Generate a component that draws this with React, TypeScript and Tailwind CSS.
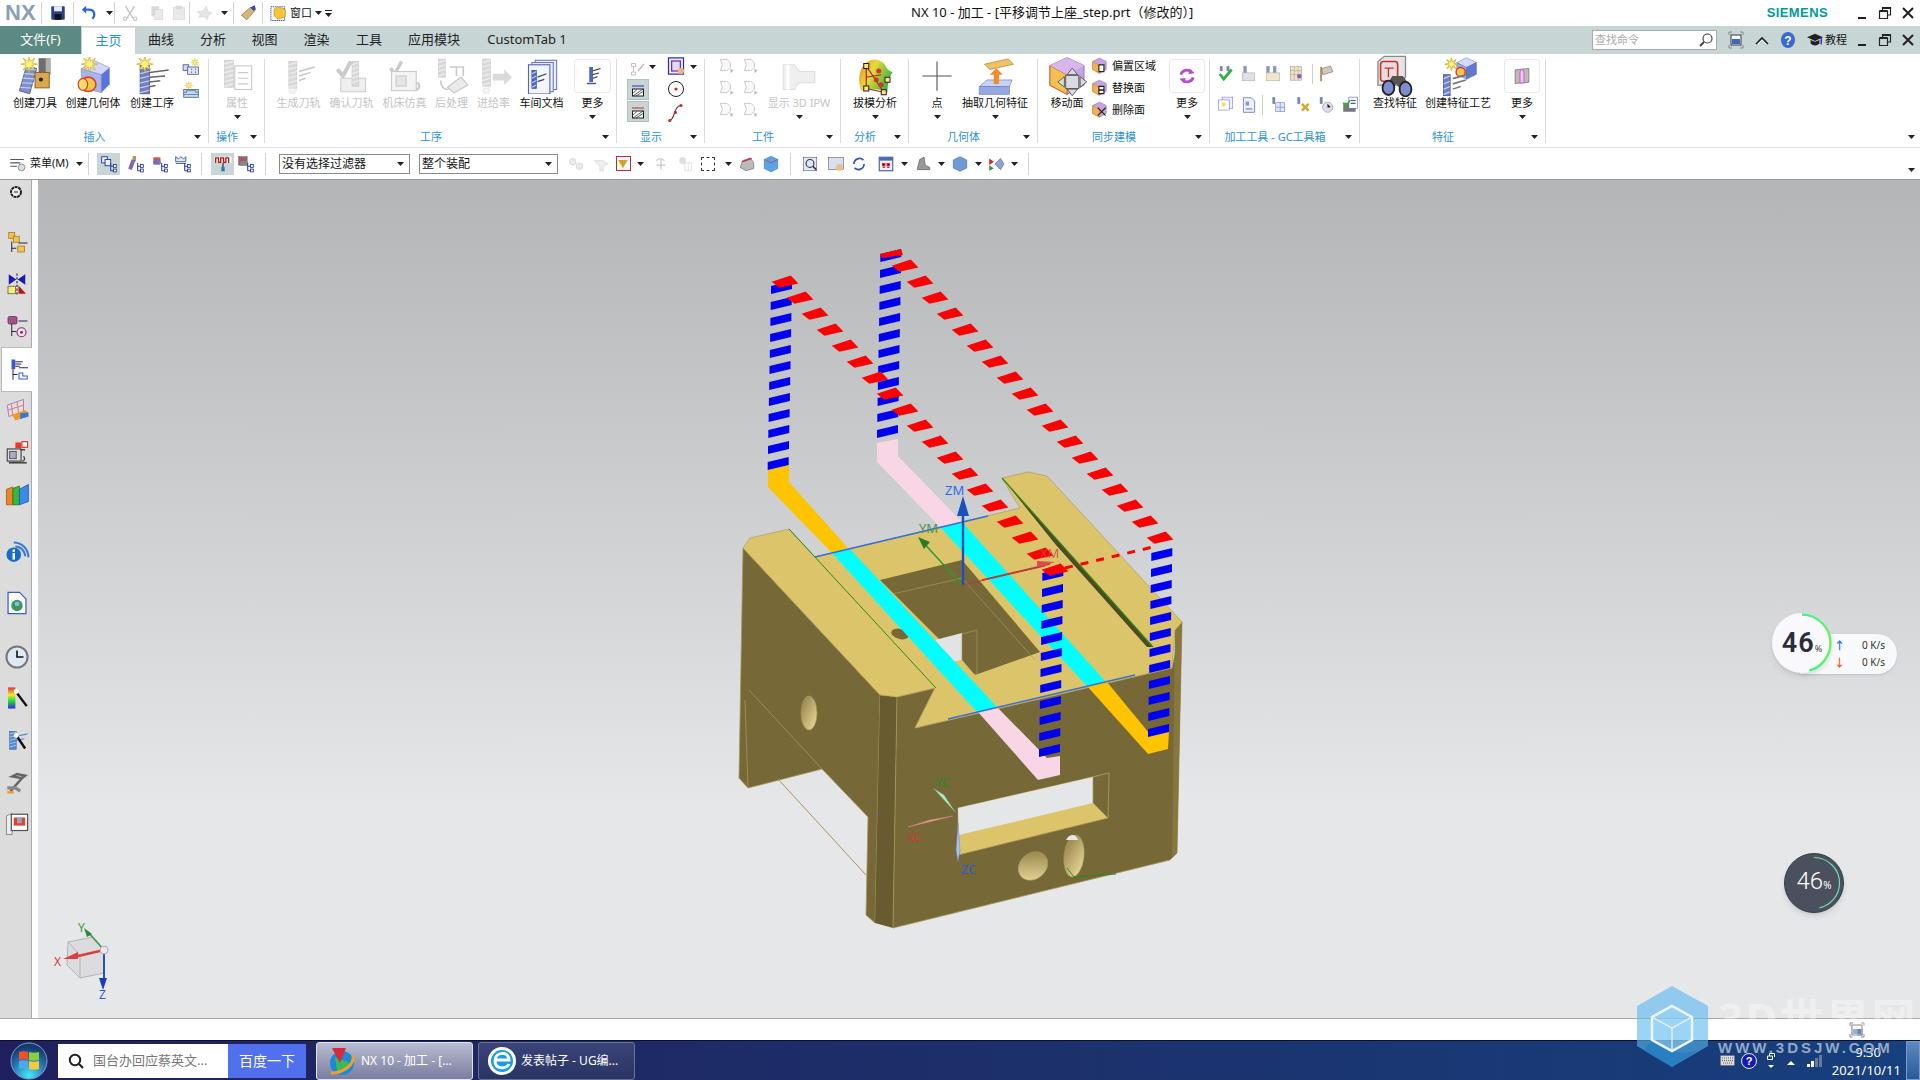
import React from 'react';

type IconProps = { s?: number; off?: boolean; children?: React.ReactNode };

// 32x32 drawing box, every icon in the ribbon goes through this
const Ico: React.FC<IconProps> = ({ s = 32, off, children }) => (
  <svg viewBox="0 0 32 32" width={s} height={s} className={off ? 'opacity-30 grayscale' : ''}>
    {children}
  </svg>
);

const Arrow = () => (
  <svg width="7" height="4" viewBox="0 0 7 4" className="shrink-0">
    <polygon points="0,0 7,0 3.5,4" fill="#222" />
  </svg>
);

// yellow burst used on the "create" icons
function spark(cx: number, cy: number, r: number) {
  const pts: string[] = [];
  for (let i = 0; i < 16; i++) {
    const a = (i * Math.PI) / 8;
    const d = i % 2 ? r * 0.38 : r;
    pts.push(`${cx + d * Math.cos(a)},${cy + d * Math.sin(a)}`);
  }
  return <polygon points={pts.join(' ')} fill="#fff27a" stroke="#c9a92a" strokeWidth="0.6" />;
}

// end mill: a ribbed cylinder
const mill = (x: number, y: number, h: number, w = 7, c = '#6f82c8') => (
  <g>
    <rect x={x} y={y} width={w} height={h} fill={c} stroke="#3c4a86" strokeWidth="0.6" />
    {Array.from({ length: Math.floor(h / 4) }).map((_, i) => (
      <line key={i} x1={x} y1={y + 3 + i * 4} x2={x + w} y2={y + 1 + i * 4} stroke="#c6d0ee" strokeWidth="1" />
    ))}
  </g>
);

const fan = (x: number, y: number, c = '#7a7f8c') => (
  <g stroke={c} strokeWidth="1.2" fill="none">
    <path d={`M${x} ${y}l14 -4M${x} ${y + 4}l10 -3M${x} ${y + 8}l6 -2`} />
  </g>
);

const cube = (x: number, y: number, k = 1) => (
  <g transform={`translate(${x} ${y}) scale(${k})`}>
    <polygon points="10,0 20,5 10,10 0,5" fill="#d2d9f6" stroke="#6a79c2" strokeWidth="0.5" />
    <polygon points="0,5 10,10 10,22 0,17" fill="#97a9ea" stroke="#6a79c2" strokeWidth="0.5" />
    <polygon points="20,5 10,10 10,22 20,17" fill="#5f78d8" stroke="#46589e" strokeWidth="0.5" />
  </g>
);

const IcoTool = () => (
  <Ico s={38}>
    <g transform="rotate(16 10 18)">{mill(6, 8, 22, 9, '#7f8fcc')}</g>
    <rect x="19" y="1" width="10" height="14" fill="#6e6e6e" />
    <rect x="25" y="1" width="4" height="14" fill="#b0b0b0" />
    <rect x="16" y="13" width="12" height="13" fill="#d8a84a" stroke="#8a5a2a" strokeWidth="0.8" />
    <circle cx="21" cy="19" r="1.7" fill="#222" />
    {spark(11, 6, 7)}
  </Ico>
);
const IcoGeom = () => (
  <Ico s={38}>
    <polygon points="17,3 30,9 23,15 6,10" fill="#cfd8f8" stroke="#7a89d2" strokeWidth="0.5" />
    <polygon points="6,10 23,15 23,30 7,26" fill="#a7b6f0" stroke="#7a89d2" strokeWidth="0.5" />
    <polygon points="30,9 23,15 23,30 30,23" fill="#5a74d8" />
    <ellipse cx="12" cy="23" rx="6.5" ry="6" fill="#f0c84a" stroke="#e0402a" strokeWidth="1.4" />
    <ellipse cx="7.5" cy="23" rx="4" ry="5" fill="#f6dc6a" stroke="#e0402a" strokeWidth="1" />
    {spark(13, 6, 7)}
  </Ico>
);
const IcoOp = () => (
  <Ico s={38}>
    {mill(6, 7, 24, 8, '#6f7fc0')}
    <path d="M14 13l16-2M14 17l13-1M14 21l9-1M14 25l5-1" stroke="#666" strokeWidth="1.3" fill="none" />
    {spark(10, 6, 7)}
  </Ico>
);
const IcoSmallA = () => (
  <Ico s={18}>
    <rect x="2" y="12" width="10" height="10" fill="#cdd8f2" stroke="#4a5c9e" strokeWidth="1.5" />
    <rect x="10" y="16" width="19" height="13" fill="#dfe6f6" stroke="#4a5c9e" strokeWidth="1.5" />
    <path d="M16 20h2M23 20h2M16 25h2M23 25h2" stroke="#4a5c9e" strokeWidth="2" />
    {spark(23, 8, 7)}
  </Ico>
);
const IcoSmallB = () => (
  <Ico s={18}>
    <rect x="3" y="15" width="26" height="14" fill="#c4d8ee" stroke="#4a6c9e" strokeWidth="1.5" />
    <path d="M3 20h5v-3h16v3h5M3 24h26" stroke="#4a6c9e" strokeWidth="1.3" fill="none" />
    {spark(12, 8, 7)}
  </Ico>
);
const IcoAttr = () => (
  <Ico s={36} off>
    {mill(5, 2, 24, 8)}
    <rect x="14" y="7" width="15" height="21" fill="#fff" stroke="#555" />
    <path d="M17 13h9M17 18h9M17 23h9" stroke="#555" />
  </Ico>
);
const IcoGen = () => (
  <Ico s={36} off>
    {mill(7, 3, 24, 7)}
    {fan(16, 12, '#444')}
    {spark(10, 29, 4)}
  </Ico>
);
const IcoVerify = () => (
  <Ico s={36} off>
    <path d="M3 10l5 6 7-13" stroke="#555" strokeWidth="3.5" fill="none" />
    <rect x="6" y="18" width="22" height="12" fill="#ccc" stroke="#666" />
    {mill(16, 3, 22, 6)}
  </Ico>
);
const IcoMachine = () => (
  <Ico s={36} off>
    <path d="M3 9l4 5 6-11" stroke="#555" strokeWidth="3" fill="none" />
    <rect x="4" y="12" width="22" height="17" fill="#ddd" stroke="#555" />
    <rect x="8" y="16" width="9" height="9" fill="#aaa" stroke="#555" />
    <path d="M26 22c4 0 3 6 0 6" stroke="#555" strokeWidth="2" fill="none" />
  </Ico>
);
const IcoPost = () => (
  <Ico s={36} off>
    {mill(4, 1, 16, 6)}
    <path d="M14 8h12v8M20 8v8" stroke="#555" strokeWidth="1.5" fill="none" />
    <polygon points="12,26 24,17 30,24 18,31" fill="#bbb" stroke="#444" />
    <path d="M6 20c0 6 3 8 7 8" stroke="#555" strokeWidth="1.5" fill="none" />
  </Ico>
);
const IcoFeed = () => (
  <Ico s={36} off>
    {mill(6, 1, 24, 7)}
    <polygon points="15,14 25,14 25,10 32,17 25,24 25,20 15,20" fill="#888" />
    {spark(9, 29, 4)}
  </Ico>
);
const IcoDoc = () => (
  <Ico s={36}>
    <rect x="10" y="2" width="19" height="26" fill="#eef1fb" stroke="#6c7bc6" />
    <rect x="7" y="4" width="19" height="26" fill="#eef1fb" stroke="#6c7bc6" />
    <rect x="4" y="6" width="19" height="26" fill="#f3f5fd" stroke="#5566bb" />
    {mill(7, 11, 16, 4, '#4a6ad0')}
    <path d="M12 17l8-3M12 21l6-2" stroke="#444" />
  </Ico>
);
const IcoMoreTool = () => (
  <Ico s={24}>
    <rect x="11" y="4" width="5" height="20" fill="#4a6ab8" />
    <path d="M16 9l10-3M16 14l8-2M16 19l6-2" stroke="#333" strokeWidth="1.6" />
    <path d="M8 26h12" stroke="#3a5aa8" strokeWidth="2" />
  </Ico>
);
const IcoDraft = () => (
  <Ico s={40}>
    <defs>
      <linearGradient id="draft" x1="0" y1="0" x2="1" y2="0.5">
        <stop offset="0" stopColor="#e8842a" />
        <stop offset="0.45" stopColor="#ecd83a" />
        <stop offset="1" stopColor="#3ab83a" />
      </linearGradient>
    </defs>
    <path d="M8 6c6-5 12-4 16 1 1 3 3 5 6 6-3 5-4 10-4 16-6-3-14-3-21-1-3-8-2-17 3-22z" fill="url(#draft)" />
    <path d="M9 8l14 21M9 8v18l14 3M9 17l12-2" stroke="#a02a2a" strokeWidth="1" fill="none" />
    {[[19, 12], [17, 19], [21, 23]].map(([x, y], i) => (
      <circle key={i} cx={x} cy={y} r="2" fill="#d8332a" />
    ))}
    {[[9, 8], [9, 26], [23, 29], [26, 19]].map(([x, y], i) => (
      <rect key={i} x={x - 2} y={y - 2} width="4" height="4" fill="#f6ee6a" stroke="#33114a" strokeWidth="0.8" />
    ))}
  </Ico>
);
const IcoExtract = () => (
  <Ico s={42}>
    <polygon points="8,7 26,3 30,7 12,11" fill="#f0c268" stroke="#b98a2a" strokeWidth="0.6" />
    <polygon points="4,24 10,19 29,19 27,24" fill="#c7d3f0" stroke="#6a79c2" strokeWidth="0.5" />
    <polygon points="4,24 27,24 27,30 4,30" fill="#93a9e4" stroke="#6a79c2" strokeWidth="0.5" />
    <polygon points="17,10 22,15 19,15 19,22 15,22 15,15 12,15" fill="#f08a2a" />
  </Ico>
);
const IcoMoveFace = () => (
  <Ico s={42}>
    <polygon points="16,2 29,8 29,23 16,30 3,23 3,8" fill="#c8a4de" stroke="#8a64a8" strokeWidth="0.6" />
    <polygon points="3,8 16,15 16,30 3,23" fill="#f2c24e" stroke="#e0603a" strokeWidth="0.8" />
    <polygon points="16,2 29,8 16,15 3,8" fill="#d8b8ec" />
    <g fill="#d8dbe0" stroke="#555" strokeWidth="0.7">
      <polygon points="20,10 24,15 16,15" />
      <polygon points="20,31 24,26 16,26" />
      <polygon points="9,20.5 14,16.5 14,24.5" />
      <polygon points="31,20.5 26,16.5 26,24.5" />
      <rect x="15" y="15.5" width="10" height="10" />
    </g>
  </Ico>
);
const IcoPoint = () => (
  <Ico s={36}>
    <path d="M16 3v26M3 16h26" stroke="#555" strokeWidth="1" />
  </Ico>
);
const IcoFace: React.FC<{ mark: string }> = ({ mark }) => (
  <Ico s={18}>
    <polygon points="15,2 27,8 27,22 15,29 3,22 3,8" fill="#c8a4de" stroke="#8a64a8" />
    <polygon points="3,8 15,15 15,29 3,22" fill="#f2b24e" stroke="#c98c2a" />
    <path d={mark} stroke="#222" strokeWidth="2" fill="#fff" />
  </Ico>
);
const IcoRefresh = () => (
  <Ico s={22}>
    <path d="M7 14a9 9 0 0 1 15-4" stroke="#b24ec8" strokeWidth="4" fill="none" />
    <path d="M25 18a9 9 0 0 1-15 4" stroke="#b24ec8" strokeWidth="4" fill="none" />
    <polygon points="20,5 27,12 18,13" fill="#b24ec8" />
    <polygon points="12,27 5,20 14,19" fill="#b24ec8" />
  </Ico>
);
const IcoFind = () => (
  <Ico s={42}>
    <polygon points="3,5 8,1 24,1 24,17 18,23 3,23" fill="#e4e4e4" stroke="#888" />
    <rect x="5" y="5" width="13" height="15" rx="2" fill="#eadcdc" stroke="#c23030" strokeWidth="1.2" />
    <path d="M8 10h7M11 10v7" stroke="#c23030" />
    <path d="M10 22l4-6h8l6 8-8 2-3-4-4 4z" fill="#555" />
    <ellipse cx="11" cy="25" rx="4.5" ry="5.5" fill="#7d8dd0" stroke="#222" strokeWidth="1.4" />
    <ellipse cx="24" cy="26" rx="4.5" ry="5.5" fill="#7d8dd0" stroke="#222" strokeWidth="1.4" />
  </Ico>
);
const IcoFeatProc = () => (
  <Ico s={42}>
    {cube(15, 2, 0.75)}
    <circle cx="18" cy="13" r="3.5" fill="#f3c84a" stroke="#d1342a" />
    {spark(11, 7, 5)}
    {mill(5, 15, 16, 5)}
    {fan(12, 18, '#777')}
  </Ico>
);
const IcoBoxPink = () => (
  <Ico s={22}>
    <polygon points="6,7 26,5 26,25 6,27" fill="#bcbcb8" stroke="#666" />
    <path d="M13 26v-16l3-4 3 4v16z" fill="#e9c8ee" stroke="#e040c8" strokeWidth="1.3" />
  </Ico>
);

// toolbar / quick-access sized icons
const Tb: React.FC<{ children?: React.ReactNode; off?: boolean }> = ({ children, off }) => (
  <Ico s={18} off={off}>
    {children}
  </Ico>
);
const Twig = () => (
  <g>
    <path d="M19 14v14M19 20h6M19 28h6" stroke="#223a9a" strokeWidth="1.8" fill="none" />
    <rect x="24" y="17" width="5" height="5" fill="#fff" stroke="#223a9a" strokeWidth="1.5" />
    <rect x="24" y="25" width="5" height="5" fill="#fff" stroke="#223a9a" strokeWidth="1.5" />
  </g>
);

const Sep = () => <div className="w-px h-[22px] bg-[#d4d4d4] shrink-0" />;

const Cell: React.FC<{ w: string; children?: React.ReactNode }> = ({ w, children }) => (
  <div className={`${w} h-full flex items-center justify-center shrink-0`}>{children}</div>
);

const Big: React.FC<{ w: string; label: string; off?: boolean; more?: boolean; box?: boolean; children?: React.ReactNode }> = ({
  w,
  label,
  off,
  more,
  box,
  children,
}) => (
  <div className={`${w} flex flex-col items-center shrink-0`}>
    <div className={`h-[34px] w-full flex items-center justify-center ${box ? 'border border-[#eaeaea] rounded-[3px]' : ''}`}>
      {children}
    </div>
    <div className={`h-[18px] mt-[1px] leading-[18px] text-[11px] whitespace-nowrap ${off ? 'text-[#c4c4c4]' : 'text-[#111]'}`}>{label}</div>
    {more && (
      <div className="h-[10px] flex items-center">
        <Arrow />
      </div>
    )}
  </div>
);

const Group: React.FC<{ w: string; label: string; pad?: string; children?: React.ReactNode }> = ({ w, label, pad = '', children }) => (
  <div className={`${w} h-[84px] flex flex-col border-r border-[#dcdcdc] shrink-0`}>
    <div className={`h-[73px] flex ${pad}`}>{children}</div>
    <div className="h-[12px] flex items-center">
      <div className="flex-1 text-center text-[11px] leading-[12px] text-[#2e92cf] whitespace-nowrap">{label}</div>
      <div className="w-[16px] mr-[3px] flex justify-center">
        <Arrow />
      </div>
    </div>
  </div>
);

const Small: React.FC<{ label: string; mark: string }> = ({ label, mark }) => (
  <div className="h-[22px] flex items-center gap-[3px]">
    <IcoFace mark={mark} />
    <span className="text-[11px] text-[#111] whitespace-nowrap">{label}</span>
  </div>
);

const GrayPlay = () => (
  <Ico s={18} off>
    <path d="M4 6h12l6 6v8l-6 6H4l4-10z" fill="#eee" stroke="#333" strokeWidth="1.5" />
    <polygon points="22,22 28,26 22,30" fill="#333" />
  </Ico>
);

const Ribbon = () => (
  <div className="h-[94px] bg-white border-b border-[#dddddd] pt-[5px] flex shrink-0">
    <Group w="w-[209px]" label="插入" pad="pl-[7px]">
      <Big w="w-[56px]" label="创建刀具"><IcoTool /></Big>
      <Big w="w-[60px]" label="创建几何体"><IcoGeom /></Big>
      <Big w="w-[58px]" label="创建工序"><IcoOp /></Big>
      <div className="w-[20px] flex flex-col items-center gap-[5px] -mt-[1px]">
        <IcoSmallA />
        <IcoSmallB />
      </div>
    </Group>
    <Group w="w-[56px]" label="操作">
      <Big w="w-[56px]" label="属性" off more><IcoAttr /></Big>
    </Group>
    <Group w="w-[352px]" label="工序" pad="pl-[7px]">
      <Big w="w-[53px]" label="生成刀轨" off><IcoGen /></Big>
      <Big w="w-[53px]" label="确认刀轨" off><IcoVerify /></Big>
      <Big w="w-[53px]" label="机床仿真" off><IcoMachine /></Big>
      <Big w="w-[41px]" label="后处理" off><IcoPost /></Big>
      <Big w="w-[43px]" label="进给率" off><IcoFeed /></Big>
      <Big w="w-[53px]" label="车间文档"><IcoDoc /></Big>
      <div className="ml-[6px]">
        <Big w="w-[37px]" label="更多" more box><IcoMoreTool /></Big>
      </div>
    </Group>
    <Group w="w-[88px]" label="显示" pad="pl-[10px]">
      <div className="w-[22px] flex flex-col items-center">
        <div className="h-[20px] flex items-center">
          <Ico s={16} off>
            <path d="M3 5h8v6H3zM3 22h8v6H3zM7 11v11" stroke="#333" fill="none" strokeWidth="2" />
            <path d="M16 20L28 6" stroke="#333" strokeWidth="3" />
          </Ico>
        </div>
        {[0, 1].map((i) => (
          <div key={i} className="w-[22px] h-[21px] bg-[#c7d6d4] border border-[#b2c2c0] flex items-center justify-center mb-px">
            <Ico s={16}>
              <path d="M4 8h24" stroke={i ? '#d22' : '#23c'} strokeWidth="2" />
              <rect x="5" y="14" width="22" height="14" fill="#fff" stroke="#222" strokeWidth="2" />
              <path d="M6 28L26 14M12 28l14-9M6 22l8-7" stroke="#222" strokeWidth="1.5" />
            </Ico>
          </div>
        ))}
      </div>
      <div className="w-[6px] pt-[6px]"><Arrow /></div>
      <div className="ml-[9px] w-[24px] flex flex-col items-center -mt-[4px]">
        <div className="h-[22px] flex items-center">
          <Ico s={20}>
            <rect x="4" y="3" width="24" height="26" fill="#eef" stroke="#2233cc" strokeWidth="2" />
            <rect x="9" y="8" width="14" height="16" fill="#dde" stroke="#8822aa" strokeWidth="2" />
            <circle cx="24" cy="24" r="5" fill="#e8b878" />
          </Ico>
        </div>
        <div className="h-[24px] flex items-center">
          <Ico s={20}>
            <circle cx="16" cy="16" r="12" fill="#fff" stroke="#222" strokeWidth="1.6" />
            <circle cx="16" cy="16" r="2.5" fill="#d22" />
          </Ico>
        </div>
        <div className="h-[24px] flex items-center">
          <Ico s={20}>
            <path d="M5 28c10 0 6-22 18-24" stroke="#444" strokeWidth="2" fill="none" />
            <circle cx="6" cy="28" r="2.5" fill="#d22" />
            <circle cx="15" cy="15" r="2.5" fill="#d22" />
            <circle cx="24" cy="4" r="2.5" fill="#d22" />
          </Ico>
        </div>
      </div>
      <div className="ml-[2px] pt-[6px]"><Arrow /></div>
    </Group>
    <Group w="w-[136px]" label="工件" pad="pl-[10px]">
      <div className="w-[48px] grid grid-cols-2 grid-rows-3 h-[66px] -mt-[5px] justify-items-center items-center">
        <GrayPlay /><GrayPlay /><GrayPlay /><GrayPlay /><GrayPlay /><GrayPlay />
      </div>
      <Big w="w-[72px]" label="显示 3D IPW" off more>
        <Ico s={36} off>
          <path d="M2 6h10c2 4 4 6 6 6h12v10H18c-2 0-4 2-6 6H2z" fill="#ccc" stroke="#999" />
          <path d="M6 6v22" stroke="#fff" strokeWidth="3" />
        </Ico>
      </Big>
    </Group>
    <Group w="w-[68px]" label="分析">
      <Big w="w-[68px]" label="拔模分析" more><IcoDraft /></Big>
    </Group>
    <Group w="w-[129px]" label="几何体">
      <Big w="w-[56px]" label="点" more><IcoPoint /></Big>
      <Big w="w-[60px]" label="抽取几何特征" more><IcoExtract /></Big>
    </Group>
    <Group w="w-[172px]" label="同步建模">
      <Big w="w-[58px]" label="移动面"><IcoMoveFace /></Big>
      <div className="w-[78px] -ml-[5px] -mt-[4px] flex flex-col">
        <Small label="偏置区域" mark="M14 14h9v12h-9z" />
        <Small label="替换面" mark="M14 13h9v6h-9zM14 20h9v6h-9z" />
        <Small label="删除面" mark="M12 12l14 14M26 12L12 26" />
      </div>
      <Big w="w-[36px]" label="更多" more box><IcoRefresh /></Big>
    </Group>
    <Group w="w-[150px]" label="加工工具 - GC工具箱" pad="pl-[4px]">
      <div className="flex flex-col gap-[9px] pt-[4px]">
        <div className="flex items-center h-[22px]">
          <Cell w="w-[23px]"><Ico s={18}><rect x="5" y="2" width="5" height="9" fill="#7a88b0" /><rect x="17" y="2" width="5" height="9" fill="#7a88b0" /><path d="M5 16l7 9L26 8" stroke="#30b040" strokeWidth="5" fill="none" /></Ico></Cell>
          <Cell w="w-[24px]"><Ico s={18}><rect x="6" y="2" width="6" height="12" fill="#8a96bc" /><rect x="4" y="14" width="22" height="14" fill="#e0e0e8" stroke="#aaa" /></Ico></Cell>
          <Cell w="w-[24px]"><Ico s={18}><rect x="4" y="2" width="6" height="12" fill="#8a96bc" /><rect x="16" y="2" width="6" height="12" fill="#8a96bc" /><rect x="4" y="14" width="24" height="14" fill="#f0e8c8" stroke="#aaa" /></Ico></Cell>
          <Cell w="w-[24px]"><Ico s={18}><rect x="4" y="3" width="20" height="24" fill="#ece4c8" stroke="#999" /><path d="M4 10h20M4 17h20M11 3v24M18 3v24" stroke="#b4a878" /><circle cx="20" cy="20" r="4" fill="#8a5ad0" /></Ico></Cell>
          <div className="w-px h-[20px] bg-[#ccc] ml-[3px]" />
          <Cell w="w-[23px]"><Ico s={18}><path d="M9 3v26" stroke="#b08a3a" strokeWidth="3" /><polygon points="10,6 26,2 30,12 12,17" fill="#d8c8a8" stroke="#5a5aaa" /></Ico></Cell>
        </div>
        <div className="flex items-center h-[22px]">
          <Cell w="w-[23px]"><Ico s={18}><rect x="9" y="2" width="19" height="20" fill="#eef" stroke="#6a79c2" /><rect x="3" y="7" width="19" height="18" fill="#fff" stroke="#6a79c2" /><circle cx="12" cy="15" r="4" fill="#f4e46a" /></Ico></Cell>
          <Cell w="w-[24px]"><Ico s={18}><path d="M6 3h14l6 6v20H6z" fill="#eef1fb" stroke="#6a79c2" strokeWidth="1.5" /><rect x="10" y="10" width="6" height="7" fill="#8a96bc" /><path d="M10 23h12" stroke="#6a79c2" strokeWidth="2" /></Ico></Cell>
          <div className="w-px h-[20px] bg-[#ccc] mx-[1px]" />
          <Cell w="w-[28px]"><Ico s={18}><rect x="6" y="2" width="5" height="12" fill="#7a88b0" /><rect x="12" y="12" width="16" height="16" fill="#dfe6f6" stroke="#6a79c2" /><path d="M12 20h16M20 12v16" stroke="#6a79c2" /></Ico></Cell>
          <Cell w="w-[22px]"><Ico s={18}><rect x="6" y="2" width="5" height="12" fill="#7a88b0" /><path d="M14 14l12 12M26 14L14 26" stroke="#d8a42a" strokeWidth="4" /></Ico></Cell>
          <Cell w="w-[24px]"><Ico s={18}><rect x="5" y="2" width="5" height="12" fill="#7a88b0" /><circle cx="19" cy="20" r="9" fill="#dde" stroke="#888" /><path d="M19 14v6h5" stroke="#444" /></Ico></Cell>
          <Cell w="w-[23px]"><Ico s={18}><rect x="4" y="12" width="22" height="16" fill="#777" /><rect x="14" y="2" width="15" height="20" fill="#fff" stroke="#4a5c9e" /><path d="M17 8h9M17 13h9" stroke="#4a5c9e" strokeWidth="2" /><path d="M4 12l5 5 7-9" stroke="#30b040" strokeWidth="3" fill="none" /></Ico></Cell>
        </div>
      </div>
    </Group>
    <Group w="w-[186px]" label="特征">
      <Big w="w-[70px]" label="查找特征"><IcoFind /></Big>
      <Big w="w-[56px]" label="创建特征工艺"><IcoFeatProc /></Big>
      <div className="ml-[18px]">
        <Big w="w-[36px]" label="更多" more box><IcoBoxPink /></Big>
      </div>
    </Group>
    <div className="flex-1 flex items-end justify-end h-[84px] pr-[5px] pb-[4px]">
      <Arrow />
    </div>
  </div>
);

const Select: React.FC<{ w: string; label: string }> = ({ w, label }) => (
  <div className={`${w} h-[20px] border border-[#8a8a8a] bg-white flex items-center justify-between pl-[2px] pr-[5px] shrink-0`}>
    <span className="text-[12px] text-[#111] whitespace-nowrap">{label}</span>
    <Arrow />
  </div>
);

const Toolbar = () => (
  <div className="h-[32px] bg-white border-b border-[#999999] flex items-center shrink-0">
    <div className="ml-[5px]"><Cell w="w-[24px]"><Tb><path d="M4 8h24M4 14h18M4 20h12" stroke="#556" strokeWidth="2" /><circle cx="24" cy="22" r="6" fill="#ddd" stroke="#555" /></Tb></Cell></div>
    <span className="w-[41px] ml-[1px] text-[11px] text-[#111] whitespace-nowrap">菜单(M)</span>
    <div className="ml-[3px] w-[10px] flex justify-center"><Arrow /></div>
    <div className="ml-[4px]"><Sep /></div>
    <div className="ml-[8px] w-[23px] h-[22px] bg-[#c7d6d4] flex items-center justify-center">
      <Tb><rect x="3" y="3" width="10" height="11" fill="#eef" stroke="#223a9a" strokeWidth="1.6" /><rect x="9" y="8" width="10" height="11" fill="#eef" stroke="#223a9a" strokeWidth="1.6" /><Twig /></Tb>
    </div>
    <div className="ml-[4px] h-[22px] flex">
      <Cell w="w-[24px]"><Tb><rect x="10" y="2" width="6" height="9" fill="#b8924a" /><rect x="5" y="8" width="7" height="18" fill="#7a6ab8" transform="rotate(20 8 17)" /><Twig /></Tb></Cell>
      <Cell w="w-[24px]"><Tb><rect x="4" y="4" width="13" height="13" rx="2" fill="#c85a5a" /><rect x="4" y="10" width="13" height="7" rx="2" fill="#5a7ad0" /><Twig /></Tb></Cell>
      <Cell w="w-[22px]"><Tb><path d="M3 3v9h18V3l-4 4-5-4-4 4zM3 15h18" stroke="#3a5a9a" strokeWidth="1.6" fill="#dfe8f4" /><Twig /></Tb></Cell>
    </div>
    <div className="ml-[7px]"><Sep /></div>
    <div className="ml-[9px] w-[23px] h-[22px] bg-[#c7d6d4] flex items-center justify-center">
      <Tb><rect x="1" y="3" width="30" height="11" fill="#fff" /><path d="M3 14V5h5v8h4V5h5v8h4V5h5v9" stroke="#b21a1a" strokeWidth="2.4" fill="none" /><path d="M16 14v14" stroke="#223" strokeWidth="2" /><rect x="13" y="21" width="6" height="8" fill="#4a6ab8" /></Tb>
    </div>
    <div className="h-[22px]"><Cell w="w-[24px]"><Tb><rect x="3" y="3" width="15" height="15" fill="#a85a6a" stroke="#666" /><rect x="6" y="11" width="13" height="8" fill="#888" /><Twig /></Tb></Cell></div>
    <div className="ml-[7px]"><Sep /></div>
    <div className="ml-[13px]"><Select w="w-[131px]" label="没有选择过滤器" /></div>
    <div className="ml-[9px]"><Select w="w-[139px]" label="整个装配" /></div>
    <div className="ml-[6px] h-[22px] flex">
      <Cell w="w-[24px]"><Tb off><circle cx="10" cy="12" r="6" fill="#bbb" stroke="#555" /><circle cx="22" cy="20" r="6" fill="#bbb" stroke="#555" /></Tb></Cell>
      <Cell w="w-[26px]"><Tb off><path d="M4 10h16l8 6-8 4v8h-6v-8z" fill="#ccc" stroke="#555" /></Tb></Cell>
      <Cell w="w-[18px]"><div className="w-[15px] h-[15px] border border-[#c23] flex items-center justify-center text-[#d8a020] text-[10px] leading-none">▼</div></Cell>
      <Cell w="w-[16px]"><Arrow /></Cell>
      <Cell w="w-[26px]"><Tb off><path d="M8 10a9 9 0 0 1 14 0M16 8v18M8 18h16" stroke="#444" strokeWidth="2" fill="none" /></Tb></Cell>
      <Cell w="w-[24px]"><Tb off><circle cx="10" cy="10" r="6" fill="#999" /><path d="M14 14h12v14H14zM20 14v14" stroke="#555" fill="none" /></Tb></Cell>
      <Cell w="w-[20px]"><div className="w-[14px] h-[14px] border border-dashed border-[#333]" /></Cell>
      <Cell w="w-[20px]"><Arrow /></Cell>
      <Cell w="w-[18px]"><Tb><polygon points="8,10 22,5 28,14 28,24 14,28 4,22" fill="#bbb" stroke="#555" /><path d="M8 12l16-6" stroke="#c23" strokeWidth="2" /></Tb></Cell>
      <Cell w="w-[30px]"><Tb><polygon points="16,2 28,8 28,24 16,30 4,24 4,8" fill="#5aa4e4" stroke="#3a78b8" /><path d="M4 8l12 6 12-6" stroke="#c23" fill="none" /></Tb></Cell>
    </div>
    <div className="ml-[4px]"><Sep /></div>
    <div className="ml-[2px] h-[22px] flex">
      <Cell w="w-[34px]"><Tb><rect x="4" y="4" width="24" height="24" fill="#e4e8f4" stroke="#555" /><circle cx="16" cy="15" r="7" fill="#dfe8f8" stroke="#335" strokeWidth="2" /><path d="M21 20l6 6" stroke="#335" strokeWidth="3" /></Tb></Cell>
      <Cell w="w-[18px]"><Tb><rect x="3" y="4" width="26" height="22" fill="#d8e0f0" stroke="#556" /><circle cx="22" cy="22" r="6" fill="#e8c090" /></Tb></Cell>
      <Cell w="w-[28px]"><Tb><path d="M7 16a10 10 0 0 1 17-7M25 16a10 10 0 0 1-17 7" stroke="#3a5aa8" strokeWidth="3" fill="none" /></Tb></Cell>
      <Cell w="w-[26px]"><Tb><rect x="4" y="4" width="24" height="24" fill="#eef" stroke="#4a5c9e" strokeWidth="2" /><rect x="4" y="4" width="24" height="6" fill="#4a6ab8" /><path d="M10 15h4v4h-4zM18 15h4v4h-4zM10 22h4M18 22h4" stroke="#d22" strokeWidth="2" /></Tb></Cell>
      <Cell w="w-[10px]"><Arrow /></Cell>
      <Cell w="w-[28px]"><Tb><path d="M6 24l4-16 8-4 2 14 8 4v4H6z" fill="#999" stroke="#444" /></Tb></Cell>
      <Cell w="w-[8px]"><Arrow /></Cell>
      <Cell w="w-[30px]"><Tb><polygon points="16,3 28,9 28,23 16,29 4,23 4,9" fill="#6f9ad8" stroke="#44668a" /></Tb></Cell>
      <Cell w="w-[6px]"><Arrow /></Cell>
      <Cell w="w-[30px]"><Tb><polygon points="4,6 12,12 4,18" fill="#c23" /><polygon points="4,18 12,24 4,28" fill="#2a9a3a" /><polygon points="14,16 24,6 30,16 24,26" fill="#8aa4d8" stroke="#556" /></Tb></Cell>
      <Cell w="w-[6px]"><Arrow /></Cell>
    </div>
    <div className="ml-[11px]"><Sep /></div>
    <div className="flex-1" />
    <div className="pr-[5px] pt-[12px]"><Arrow /></div>
  </div>
);

const TitleBar = () => (
  <div className="h-[26px] bg-white relative flex items-center shrink-0">
    <span className="w-[41px] pl-[5px] text-[22px] font-bold leading-none text-[#8a9fb4] [font-family:'Liberation_Sans',sans-serif]">NX</span>
    <Sep />
    <Cell w="w-[31px]">
      <Ico s={18}>
        <rect x="4" y="4" width="24" height="24" rx="2" fill="#2a3f8c" />
        <rect x="9" y="4" width="14" height="9" fill="#e8ecf8" />
        <rect x="10" y="18" width="12" height="10" fill="#111" />
      </Ico>
    </Cell>
    <Sep />
    <Cell w="w-[30px]">
      <Ico s={18}><path d="M22 26c6-6 4-16-6-16H8" stroke="#2a6ad8" strokeWidth="4" fill="none" /><polygon points="11,3 11,17 3,10" fill="#2a6ad8" /></Ico>
    </Cell>
    <Cell w="w-[10px]"><Arrow /></Cell>
    <Sep />
    <Cell w="w-[30px]"><Ico s={18} off><path d="M8 4l14 22M24 4L10 26" stroke="#444" strokeWidth="2.5" /><circle cx="7" cy="26" r="3" fill="none" stroke="#444" strokeWidth="2" /><circle cx="25" cy="26" r="3" fill="none" stroke="#444" strokeWidth="2" /></Ico></Cell>
    <Cell w="w-[24px]"><Ico s={18} off><rect x="6" y="4" width="14" height="18" fill="#888" /><rect x="12" y="10" width="14" height="18" fill="#bbb" stroke="#666" /></Ico></Cell>
    <Cell w="w-[20px]"><Ico s={18} off><rect x="6" y="6" width="20" height="22" fill="#bba" stroke="#666" /><rect x="10" y="3" width="12" height="6" fill="#888" /></Ico></Cell>
    <Sep />
    <Cell w="w-[28px]"><Ico s={18} off><polygon points="20,4 24,14 30,16 24,20 22,28 16,22 6,24 10,18 4,14 14,12" fill="#aaa" stroke="#666" /></Ico></Cell>
    <Cell w="w-[12px]"><Arrow /></Cell>
    <div className="ml-[3px]"><Sep /></div>
    <Cell w="w-[28px]"><Ico s={18}><polygon points="4,20 20,6 28,12 14,28" fill="#d8b478" stroke="#665" /><polygon points="20,6 28,2 30,10 26,12" fill="#3a4a9a" /></Ico></Cell>
    <Sep />
    <div className="ml-[6px]">
      <Ico s={20}>
        <rect x="3" y="6" width="22" height="22" fill="#fff" stroke="#3344cc" strokeDasharray="2 1" strokeWidth="1.5" />
        <polygon points="14,6 26,10 26,22 14,26 8,20 8,10" fill="#f6c63a" stroke="#b98a1a" />
      </Ico>
    </div>
    <span className="ml-[1px] w-[21px] text-[11px] text-[#111] whitespace-nowrap">窗口</span>
    <Cell w="w-[14px]"><Arrow /></Cell>
    <div className="flex flex-col gap-[2px] items-center">
      <div className="w-[7px] h-px bg-[#222]" />
      <Arrow />
    </div>
    <div className="absolute left-[911px] top-0 h-[26px] flex items-center text-[13px] text-[#111] whitespace-nowrap">NX 10 - 加工 - [平移调节上座_step.prt（修改的）]</div>
    <div className="flex-1" />
    <span className="text-[13px] font-bold tracking-[0.4px] text-[#009999] [font-family:'Liberation_Sans',sans-serif] mr-[27px]">SIEMENS</span>
    <WinBtns />
  </div>
);

const WinBtns = () => (
  <div className="flex items-center gap-[9px] pr-[5px]">
    <svg width="14" height="14" viewBox="0 0 14 14"><path d="M3 12h8" stroke="#222" strokeWidth="2" /></svg>
    <svg width="14" height="14" viewBox="0 0 14 14"><path d="M1.5 5h8v7.5h-8zM4.5 5V1.5h8v7.5H9.5" stroke="#222" strokeWidth="1.2" fill="none" /><path d="M1.5 5h8M4.5 2h8" stroke="#222" strokeWidth="2" /></svg>
    <svg width="14" height="14" viewBox="0 0 14 14"><path d="M2 2l10 10M12 2L2 12" stroke="#222" strokeWidth="2" /></svg>
  </div>
);

const Tab: React.FC<{ w: string; label: string }> = ({ w, label }) => (
  <div className={`${w} h-full flex items-center justify-center text-[13px] text-[#222] whitespace-nowrap`}>{label}</div>
);

const TabBar = () => (
  <div className="h-[28px] bg-[#c7d6d4] flex items-center shrink-0">
    <div className="w-[81px] h-full bg-[#5b8a82] text-white text-[13px] flex items-center justify-center">文件(F)</div>
    <div className="ml-px w-[53px] h-[27px] mt-px bg-white border-t border-[#dddddd] text-[#2e92cf] text-[13px] flex items-center justify-center">主页</div>
    <Tab w="w-[52px]" label="曲线" />
    <Tab w="w-[52px]" label="分析" />
    <Tab w="w-[51px]" label="视图" />
    <Tab w="w-[53px]" label="渲染" />
    <Tab w="w-[52px]" label="工具" />
    <Tab w="w-[78px]" label="应用模块" />
    <Tab w="w-[108px]" label="CustomTab 1" />
    <div className="flex-1" />
    <div className="w-[125px] h-[20px] bg-white border border-[#aaaaaa] flex items-center justify-between pl-[2px] pr-[2px]">
      <span className="text-[11px] text-[#aaaaaa]">查找命令</span>
      <svg width="16" height="16" viewBox="0 0 16 16"><circle cx="9.5" cy="6.5" r="4.5" fill="#fff" stroke="#444" strokeWidth="1.2" /><path d="M6 10l-4 4" stroke="#444" strokeWidth="2" /></svg>
    </div>
    <div className="w-[38px] flex justify-center">
      <svg width="16" height="18" viewBox="0 0 16 18"><path d="M1 4V1h3M12 1h3v3M1 14v3h3M12 17h3v-3" stroke="#888" fill="none" /><rect x="3" y="4" width="10" height="10" fill="#fff" stroke="#334" /><rect x="4" y="8" width="8" height="5" fill="#3a6ab8" /></svg>
    </div>
    <div className="w-[14px] flex justify-center">
      <svg width="14" height="10" viewBox="0 0 14 10"><path d="M1 9l6-6 6 6" stroke="#222" strokeWidth="1.6" fill="none" /><path d="M3 9l4-4 4 4" stroke="#fff" fill="none" /></svg>
    </div>
    <div className="w-[38px] flex justify-center">
      <svg width="16" height="18" viewBox="0 0 16 18"><ellipse cx="8" cy="9" rx="7" ry="8" fill="#3a6ad0" /><text x="8" y="13.5" textAnchor="middle" fontSize="12" fontWeight="700" fill="#fff" fontFamily="Liberation Sans">?</text></svg>
    </div>
    <div className="w-[16px] flex justify-center">
      <svg width="18" height="14" viewBox="0 0 18 14"><polygon points="0,4 9,0 18,4 9,8" fill="#222" /><path d="M4 7v4c3 3 7 3 10 0V7l-5 2z" fill="#222" /><path d="M16 4v8" stroke="#22c" strokeWidth="1.5" /></svg>
    </div>
    <span className="ml-[2px] w-[30px] text-[11px] text-[#111]">教程</span>
    <WinBtns />
  </div>
);

const SideCell: React.FC<{ m: string; children?: React.ReactNode }> = ({ m, children }) => (
  <div className={`h-[36px] w-full flex items-center justify-center pl-[3px] ${m}`}>{children}</div>
);

const Sidebar = () => (
  <div className="w-[32px] bg-[#dcdcdc] border-r border-[#aaaaaa] flex flex-col items-center shrink-0">
    <div className="h-[24px] flex items-center">
      <svg width="16" height="16" viewBox="0 0 16 16"><circle cx="8" cy="8" r="5" fill="#eee" stroke="#222" strokeWidth="2" strokeDasharray="3 0.6" /><path d="M6 8h4" stroke="#222" /></svg>
    </div>
    <SideCell m="mt-[21px]"><Ico s={24}><rect x="5" y="2" width="8" height="8" fill="#f2c24e" stroke="#a8781a" /><rect x="11" y="7" width="8" height="8" fill="#f2c24e" stroke="#a8781a" /><path d="M9 14v14M9 23h6M18 16h12" stroke="#113" strokeWidth="1.2" fill="none" /><rect x="17" y="20" width="9" height="8" fill="#f2c24e" stroke="#a8781a" /></Ico></SideCell>
    <SideCell m="mt-[5px]"><Ico s={24}><polygon points="5,3 15,10 5,17" fill="#1a1ab0" /><polygon points="27,3 17,10 27,17" fill="#1a1ab0" /><path d="M16 2v28" stroke="#222" strokeDasharray="3 2" strokeWidth="1.5" /><rect x="4" y="19" width="10" height="10" fill="#f6ee6a" stroke="#555" /><polygon points="18,29 28,29 18,18" fill="#b01a1a" /></Ico></SideCell>
    <SideCell m="mt-[7px]"><Ico s={24}><rect x="4" y="2" width="12" height="10" rx="2" fill="#a0528a" stroke="#6a2a5a" /><path d="M9 12v16M9 22h6M18 8h12" stroke="#113" strokeWidth="1.2" fill="none" /><circle cx="22" cy="23" r="6" fill="#f0e0f0" stroke="#8a2a6a" strokeWidth="1.5" /><circle cx="22" cy="23" r="2" fill="#8a2a6a" /></Ico></SideCell>
    <div className="mt-[2px] h-[45px] w-[31px] self-end -mr-px bg-white border-y border-l border-[#bbbbbb] flex items-center justify-center pl-[3px]">
      <Ico s={24}><rect x="6" y="2" width="5" height="13" fill="#3a5ad0" /><path d="M11 5h10M11 8h8M11 11h6M8 15v14M8 22h6M16 13h12" stroke="#113" strokeWidth="1.2" fill="none" /><path d="M16 28v-8h5v4h6v4z" fill="#fff" stroke="#3a5ad0" strokeWidth="1.4" /></Ico>
    </div>
    <SideCell m=""><Ico s={26}><polygon points="4,10 24,3 24,18 6,24" fill="#f0dcc0" stroke="#9a6ac8" /><path d="M5 16l19-6M9 9l2 14M16 6l2 14" stroke="#a06ad0" /><polygon points="10,22 26,16 30,19 30,24 14,29" fill="#f09a2a" /><polygon points="20,20 30,19 30,24 20,27" fill="#2a7ad8" /></Ico></SideCell>
    <SideCell m="mt-[7px]"><Ico s={26}><rect x="4" y="11" width="17" height="15" fill="#ddd" stroke="#444" strokeWidth="1.4" /><rect x="7" y="14" width="8" height="9" fill="#aac" stroke="#444" /><path d="M20 12l6 0M22 26c4 0 4-4 2-6" stroke="#444" strokeWidth="1.6" fill="none" /><rect x="14" y="3" width="7" height="7" fill="#e8392a" /><rect x="22" y="2" width="7" height="7" fill="#fff" stroke="#e8392a" strokeWidth="1.5" /><path d="M6 28h22" stroke="#444" strokeWidth="2" /></Ico></SideCell>
    <SideCell m="mt-[6px]"><Ico s={26}><polygon points="3,9 11,6 11,28 3,28" fill="#e8862a" stroke="#a85a1a" /><polygon points="11,8 19,5 19,28 11,28" fill="#3ab83a" stroke="#1a7a1a" /><polygon points="19,9 30,3 30,24 19,28" fill="#3a8ae8" stroke="#1a5aa8" /></Ico></SideCell>
    <SideCell m="mt-[18px]"><Ico s={26}><path d="M12 8a18 18 0 0 1 18 18" stroke="#3a7ad8" strokeWidth="2.5" fill="none" /><path d="M14 13a12 12 0 0 1 12 12" stroke="#3a7ad8" strokeWidth="2.5" fill="none" /><circle cx="12" cy="23" r="9" fill="#1a6ac8" /><rect x="10.5" y="21" width="3" height="8" fill="#fff" /><rect x="10.5" y="16.5" width="3" height="3" fill="#fff" /></Ico></SideCell>
    <SideCell m="mt-[18px]"><Ico s={26}><path d="M5 3h14l8 8v18H5z" fill="#fff" stroke="#3a5ad0" strokeWidth="1.5" /><circle cx="16" cy="19" r="7" fill="#3a9a5a" /><circle cx="16" cy="17" r="3" fill="#8ab8e8" /></Ico></SideCell>
    <SideCell m="mt-[18px]"><Ico s={26}><circle cx="16" cy="16" r="13" fill="#dfe8f4" stroke="#777" strokeWidth="2.5" /><path d="M16 8v8h8" stroke="#111" strokeWidth="2" fill="none" /></Ico></SideCell>
    <SideCell m="mt-[5px]"><Ico s={26}>
      <defs><linearGradient id="rain" x1="0" y1="0" x2="0" y2="1"><stop offset="0" stopColor="#e82a2a" /><stop offset="0.35" stopColor="#f6e62a" /><stop offset="0.6" stopColor="#2ae82a" /><stop offset="1" stopColor="#2a2ae8" /></linearGradient></defs>
      <rect x="5" y="3" width="9" height="26" fill="url(#rain)" /><path d="M16 10l12 16" stroke="#111" strokeWidth="3" /><circle cx="15" cy="8" r="3" fill="#fff" />
    </Ico></SideCell>
    <SideCell m="mt-[8px]"><Ico s={26}>{mill(7, 3, 22, 8, '#4a8ad8')}<path d="M15 9l14-3M15 14l10-2" stroke="#4a8ad8" strokeWidth="1.4" /><path d="M16 9l10 15" stroke="#111" strokeWidth="3" /><circle cx="15" cy="8" r="3" fill="#fff" /></Ico></SideCell>
    <SideCell m="mt-[5px]"><Ico s={26}><path d="M8 26L24 8M10 8l6-3 10 2-4 3-6-1z" stroke="#666" strokeWidth="3" fill="none" /><path d="M4 22h10l6 4" stroke="#888" strokeWidth="4" fill="none" /><rect x="4" y="26" width="8" height="3" fill="#f09a2a" /></Ico></SideCell>
    <SideCell m="mt-[5px]"><Ico s={26}><polygon points="3,6 10,3 10,29 3,29" fill="#eee" stroke="#777" /><rect x="9" y="4" width="20" height="20" fill="#fff" stroke="#555" strokeWidth="1.5" /><rect x="12" y="8" width="14" height="10" fill="#e8402a" /><rect x="16" y="8" width="6" height="7" fill="#8ac" /></Ico></SideCell>
  </div>
);

// model geometry is kept in screen coordinates, the svg viewBox starts at the viewport corner
const LIGHT = '#dcc46a';
const DARK = '#776838';
const EDGE = '#a8965a';

const blueStack = (x: number, y: number) =>
  Array.from({ length: 12 }).map((_, i) => {
    const bx = x + i * 0.3;
    const by = y - i * 16;
    return <polygon key={i} points={`${bx},${by} ${bx + 21},${by - 5} ${bx + 21},${by - 13} ${bx},${by - 8}`} fill="#0000f0" />;
  });

const redLine = (x: number, y: number, n: number) =>
  Array.from({ length: n }).map((_, i) => {
    const rx = x + i * 15;
    const ry = y + i * 16;
    return <polygon key={i} points={`${rx},${ry} ${rx + 19},${ry - 6.3} ${rx + 26.7},${ry + 1.7} ${rx + 7.7},${ry + 6}`} fill="#ff0000" />;
  });

const Model = () => (
  <svg viewBox="38 180 1882 838" className="absolute inset-0 w-full h-full">
    <defs>
      <linearGradient id="hole" x1="0" y1="0" x2="1" y2="1">
        <stop offset="0" stopColor="#8a7a42" />
        <stop offset="1" stopColor="#f0e0a0" />
      </linearGradient>
    </defs>
    {/* left side */}
    <polygon points="743,548 880,695 875,923 866,915 868,817 822,769 748,788 739,778" fill={DARK} stroke={EDGE} strokeWidth="0.8" />
    <path d="M749 690L822 769M745 700L748 788" stroke={EDGE} strokeWidth="0.8" fill="none" />
    <path d="M778 779L866 875" stroke="#a8965a" strokeWidth="1" />
    <polygon points="880,695 897,697 893,928 875,923" fill="#695b30" />
    {/* front */}
    <polygon points="897,697 935,688 915,728 1172,668 1182,622 1177,853 1170,860 893,928" fill={DARK} stroke={EDGE} strokeWidth="0.8" />
    <polygon points="1175,630 1182,622 1177,853 1172,858" fill="#86773f" />
    {/* top surface */}
    <polygon points="743,548 750,538 789,529 815,557 1020,508 1002,478 1028,472 1047,476 1182,622 1175,630 1172,668 915,728 935,688 897,697 880,695" fill={LIGHT} stroke={EDGE} strokeWidth="0.6" />
    {/* pocket */}
    <polygon points="880,580 962,560 1040,652 975,675" fill={DARK} />
    <path d="M893 594L962 578L1035 660" stroke={EDGE} strokeWidth="0.7" fill="none" />
    <polygon points="935,640 962,633 962,660 953,662" fill="#e2e3e5" />
    <polygon points="962,634 977,630 977,673 973,675 962,660" fill={DARK} stroke={EDGE} strokeWidth="0.7" />
    <polygon points="953,662 962,660 975,675 970,677" fill={LIGHT} />
    <ellipse cx="900" cy="634" rx="9" ry="5" fill={DARK} transform="rotate(15 900 634)" />
    <path d="M789 529L936 688" stroke="#2a8a1a" strokeWidth="1" />
    {/* right rail groove */}
    <polygon points="1002,478 1153,647 1147,647 1056,545" fill="#4e4a24" />
    <path d="M1002 478L1153 647" stroke="#2a8a1a" strokeWidth="1.2" />
    {/* cyan strips */}
    <polygon points="832,553 850,549 997,707 977,712" fill="#00ffff" />
    <polygon points="940,527 962,522 1105,681 1087,686" fill="#00ffff" />
    {/* orange and pink run-outs */}
    <polygon points="768,470 789,465 789,482 848,548 832,553 768,487" fill="#ffc400" />
    <polygon points="877,443 898,439 898,456 962,522 940,527 877,462" fill="#f9d6e6" />
    <polygon points="978,712 998,708 1047,758 1060,756 1060,775 1038,780" fill="#f9d6e6" />
    <polygon points="1087,686 1107,682 1149,733 1169,731 1168,749 1148,754" fill="#ffc400" />
    <path d="M815 557L988 516M948 719L1135 675" stroke="#3a6fd0" strokeWidth="1.6" />
    {/* slot in the front face */}
    <polygon points="958,808 1109,773 1108,818 958,855" fill={LIGHT} stroke={EDGE} strokeWidth="0.7" />
    <polygon points="958,808 1093,777 1093,803 959,835" fill="#e5e6e8" />
    <polygon points="1093,777 1109,773 1108,818 1093,803" fill={DARK} stroke={EDGE} strokeWidth="0.7" />
    {/* holes */}
    <ellipse cx="809" cy="713" rx="8" ry="17" fill="url(#hole)" stroke={EDGE} strokeWidth="0.6" />
    <ellipse cx="1033" cy="866" rx="13" ry="16" fill="url(#hole)" stroke={EDGE} strokeWidth="0.6" transform="rotate(50 1033 866)" />
    <ellipse cx="1074" cy="856" rx="10" ry="21" fill="url(#hole)" stroke={EDGE} strokeWidth="0.6" transform="rotate(6 1074 856)" />
    <path d="M1066 840c3 -6 10 -7 12 0" fill="#e5e6e8" />
    <path d="M1067 868l7 9 42 -3" stroke="#2a8a1a" strokeWidth="1" fill="none" />
    {/* tool path */}
    {blueStack(767.7, 470)}
    {blueStack(877, 438)}
    {blueStack(1039, 757)}
    {blueStack(1148, 737)}
    <polygon points="880,254 901,249 903,255 882,258" fill="#ff0000" />
    {redLine(771.7, 281.7, 19)}
    {redLine(891.7, 265.7, 18)}
    <path d="M1065 568L1153 547" stroke="#ff0000" strokeWidth="3" strokeDasharray="8 8" />
    {/* work coordinate system */}
    <path d="M982 580L1050 564" stroke="#b83a3a" strokeWidth="1.5" />
    <polygon points="1037,561 1055,562 1037,568" fill="#e04a4a" />
    <path d="M962 585L921 540" stroke="#2a9a2a" strokeWidth="1.5" />
    <polygon points="918,537 930,542 924,549" fill="#2a7a2a" />
    <path d="M963 585V510" stroke="#1a4fc0" strokeWidth="2.4" />
    <polygon points="963,496 969,516 957,516" fill="#1a4fc0" />
    <path d="M963 585L1045 566" stroke="#b83a3a" strokeWidth="1" />
    <text x="945" y="495" fontSize="13" fill="#2a6af0" fontFamily="Noto Sans">ZM</text>
    <text x="919" y="533" fontSize="13" fill="#4a9a4a" fontFamily="Noto Sans">YM</text>
    <text x="1040" y="558" fontSize="13" fill="#c84a4a" opacity="0.8" fontFamily="Noto Sans">XM</text>
    {/* absolute csys */}
    <polygon points="956,813 935,790 933,788 944,795" fill="#b8e8c0" stroke="#5a9a6a" strokeWidth="0.4" />
    <polygon points="953,816 908,827 930,820" fill="#f4b0b4" stroke="#c87a7a" strokeWidth="0.6" />
    <polygon points="958,823 960,850 958,862 956,850" fill="#a8c0ec" stroke="#5a7ad0" strokeWidth="0.4" />
    <text x="935" y="787" fontSize="13" fill="#2a8a2a" fontFamily="Noto Sans">YC</text>
    <text x="907" y="842" fontSize="13" fill="#c83a3a" fontFamily="Noto Sans">XC</text>
    <text x="961" y="874" fontSize="13" fill="#2a5ad8" fontFamily="Noto Sans">ZC</text>
    {/* view triad */}
    <polygon points="68,942 93,937 104,950 104,973 80,978 67,965" fill="#d6d6d8" fillOpacity="0.6" stroke="#b4b4b6" />
    <path d="M68 942L80 955L104 950M80 955V978" stroke="#b4b4b6" fill="none" />
    <path d="M104 950L88 932" stroke="#4a9a4a" strokeWidth="1.8" />
    <polygon points="84,928 92,934 87,937" fill="#2a8a3a" />
    <path d="M104 950L74 957" stroke="#d84040" strokeWidth="2.4" />
    <polygon points="63,959 78,952 78,959" fill="#d84040" />
    <path d="M104 950V980" stroke="#1a3fb8" strokeWidth="1.8" />
    <polygon points="103,990 99,978 107,978" fill="#1a3fb8" />
    <circle cx="104" cy="950" r="4" fill="#e8e8e8" stroke="#aaa" />
    <text x="78" y="932" fontSize="12" fill="#3a9a3a" fontFamily="Noto Sans">Y</text>
    <text x="54" y="966" fontSize="12" fill="#d83a3a" fontFamily="Noto Sans">X</text>
    <text x="99" y="999" fontSize="12" fill="#2a5ad8" fontFamily="Noto Sans">Z</text>
  </svg>
);

const Meter = () => (
  <>
    <div className="absolute left-[1800px] top-[634px] w-[97px] h-[40px] rounded-r-[20px] bg-[#f8f9fa] shadow-sm flex flex-col justify-center gap-[2px] pl-[34px] pr-[12px]">
      <div className="flex items-center justify-between text-[10px] leading-[15px] text-[#333]"><span className="text-[#1a7af0] text-[11px] font-bold">↑</span><span>0 K/s</span></div>
      <div className="flex items-center justify-between text-[10px] leading-[15px] text-[#333]"><span className="text-[#f0602a] text-[11px] font-bold">↓</span><span>0 K/s</span></div>
    </div>
    <div className="absolute left-[1772px] top-[613px] w-[60px] h-[60px] rounded-full bg-[#f9f9fd] shadow-md flex items-baseline justify-center pt-[14px]">
      <span className="text-[27px] leading-[32px] tracking-[1px] font-semibold text-[#2a2d3a] [font-family:Roboto,sans-serif]">46</span>
      <span className="text-[9px] text-[#444]">%</span>
    </div>
    <svg width="60" height="60" viewBox="0 0 60 60" className="absolute left-[1772px] top-[613px] -rotate-90">
      <defs>
        <linearGradient id="ring" x1="0" y1="0" x2="0" y2="1"><stop offset="0" stopColor="#2ae8c8" /><stop offset="1" stopColor="#6af06a" /></linearGradient>
      </defs>
      <circle cx="30" cy="30" r="28.5" fill="none" stroke="url(#ring)" strokeWidth="2.5" strokeDasharray="82 180" />
    </svg>
    <div className="absolute left-[1784px] top-[853px] w-[60px] h-[60px] rounded-full bg-[#4b505e] shadow-md border border-[#3a3e4a] flex items-baseline justify-center pt-[11px] text-white">
      <span className="text-[24px] leading-[32px] font-light [font-family:Roboto,sans-serif]">46</span>
      <span className="text-[10px]">%</span>
    </div>
    <svg width="60" height="60" viewBox="0 0 60 60" className="absolute left-[1784px] top-[853px] -rotate-90">
      <circle cx="30" cy="30" r="25.5" fill="none" stroke="#6ae0b4" strokeWidth="1.2" strokeDasharray="74 180" />
    </svg>
  </>
);

const Watermark = () => (
  <>
    <svg width="76" height="82" viewBox="0 0 76 82" className="absolute left-[1636px] top-[986px]">
      <polygon points="36,0 72,20 72,60 36,81 1,60 1,20" fill="#5ab8f0" fillOpacity="0.6" />
      <path d="M16 54c10 12 30 16 46 10L36 81 8 65z" fill="#1a7ac0" fillOpacity="0.55" />
      <polygon points="36,20 56,31 56,54 36,65 16,54 16,31" fill="#9ad4f4" fillOpacity="0.5" stroke="#eaf6fd" strokeWidth="2.5" />
      <path d="M16 31l20 11 20-11M36 42v23" stroke="#eaf6fd" strokeWidth="1.2" fill="none" />
    </svg>
    <div className="absolute left-[1718px] top-[994px] text-[44px] leading-[50px] font-bold text-white/35 whitespace-nowrap tracking-[2px]">3D世界网</div>
    <div className="absolute left-[1718px] top-[1039px] text-[15px] leading-[18px] font-bold text-[#93a9c8] whitespace-nowrap tracking-[3px] [font-family:'Liberation_Sans',sans-serif]">WWW.3DSJW.COM</div>
  </>
);

const TaskBtn: React.FC<{ w: string; active?: boolean; label: string; children?: React.ReactNode }> = ({ w, active, label, children }) => (
  <div className={`${w} h-[38px] rounded-[3px] border flex items-center gap-[4px] pl-[8px] text-[12px] text-white whitespace-nowrap ${active ? 'bg-linear-to-b from-[#b8bcd0] to-[#7a7ea0] border-[#e0e2ec]' : 'bg-linear-to-b from-[#3a4478] to-[#2a3464] border-[#6a7294]'}`}>
    {children}
    <span>{label}</span>
  </div>
);

const Taskbar = () => (
  <div className="h-[40px] bg-linear-to-r from-[#20205e] via-[#1c2f6a] to-[#16407e] border-t border-[#0a1030] flex items-center text-white shrink-0">
    <div className="w-[58px] flex justify-center">
      <svg width="38" height="38" viewBox="0 0 38 38">
        <defs>
          <radialGradient id="orb" cx="0.5" cy="0.9" r="0.8"><stop offset="0" stopColor="#48e8f8" /><stop offset="0.55" stopColor="#2a7ab8" /><stop offset="1" stopColor="#123a6a" /></radialGradient>
        </defs>
        <circle cx="19" cy="19" r="18" fill="url(#orb)" stroke="#7aa0c8" />
        <path d="M9 10c3-1 6-1 9 0v8c-3-1-6-1-9 0z" fill="#f0502a" />
        <path d="M19 10c3 1 7 1 10 0v8c-3 1-7 1-10 0z" fill="#8ad03a" />
        <path d="M9 19c3-1 6-1 9 0v8c-3-1-6-1-9 0z" fill="#4aaaf0" />
        <path d="M19 19c3 1 7 1 10 0v8c-3 1-7 1-10 0z" fill="#f6c83a" />
      </svg>
    </div>
    <div className="w-[170px] h-[34px] bg-white flex items-center pl-[10px] gap-[9px] shrink-0">
      <svg width="16" height="16" viewBox="0 0 16 16"><circle cx="7" cy="7" r="5.2" fill="none" stroke="#222" strokeWidth="2" /><path d="M11 11l4 4" stroke="#222" strokeWidth="2.2" /></svg>
      <span className="text-[13px] text-[#777777] whitespace-nowrap">国台办回应蔡英文...</span>
    </div>
    <div className="w-[78px] h-[34px] bg-[#5170ee] text-[14px] flex items-center justify-center shrink-0">百度一下</div>
    <div className="ml-[10px]">
      <TaskBtn w="w-[157px]" active label="NX 10 - 加工 - [...">
        <svg width="32" height="32" viewBox="0 0 32 32">
          <circle cx="17" cy="18" r="12" fill="#1a8ad8" />
          <path d="M10 12c6 4 10 2 16 8-4 6-10 8-14 6z" fill="#3ab85a" />
          <path d="M28 10c2 10-10 18-22 18" stroke="#f0a02a" strokeWidth="3" fill="none" />
          <polygon points="7,3 21,3 15,18" fill="#d82a3a" />
        </svg>
      </TaskBtn>
    </div>
    <div className="ml-[5px]">
      <TaskBtn w="w-[157px]" label="发表帖子 - UG编...">
        <svg width="30" height="30" viewBox="0 0 30 30">
          <circle cx="15" cy="15" r="14" fill="#fff" />
          <circle cx="15" cy="15" r="11" fill="#1a9ae8" />
          <path d="M8 14h14c0-9-14-9-14 1 0 9 12 8 14 3" stroke="#fff" strokeWidth="3" fill="none" />
        </svg>
      </TaskBtn>
    </div>
    <div className="flex-1" />
    <div className="w-[22px] flex justify-center">
      <svg width="15" height="11" viewBox="0 0 15 11"><rect x="0.5" y="0.5" width="14" height="10" rx="1" fill="#d8d8d8" stroke="#777" /><path d="M2 3h11M2 5.5h11M3 8h9" stroke="#666" strokeDasharray="1 1" /></svg>
    </div>
    <div className="w-[22px] flex justify-center">
      <svg width="16" height="16" viewBox="0 0 16 16"><circle cx="8" cy="8" r="7.5" fill="#1a1ab8" stroke="#eee" /><text x="8" y="12" textAnchor="middle" fontSize="11" fontWeight="700" fill="#fff" fontFamily="Liberation Sans">?</text></svg>
    </div>
    <div className="w-[22px] flex flex-col items-center gap-[5px]">
      <svg width="8" height="7" viewBox="0 0 8 7"><path d="M0.5 3h5v3.5h-5zM2.5 3V0.5h5V4" stroke="#fff" fill="none" /></svg>
      <svg width="6" height="3" viewBox="0 0 6 3"><polygon points="0,0 6,0 3,3" fill="#fff" /></svg>
    </div>
    <div className="w-[18px] flex justify-center pt-[4px]">
      <svg width="8" height="4" viewBox="0 0 8 4"><polygon points="0,4 8,4 4,0" fill="#fff" /></svg>
    </div>
    <div className="w-[30px] flex justify-center">
      <svg width="16" height="12" viewBox="0 0 16 12"><rect x="0" y="9" width="3" height="3" fill="#fff" /><rect x="4" y="6" width="3" height="6" fill="#fff" /><rect x="8" y="3" width="3" height="9" fill="#6a7a98" /><rect x="12" y="0" width="3" height="12" fill="#6a7a98" /></svg>
    </div>
    <div className="w-[73px] flex flex-col items-end text-[13px] leading-[18px] pr-[2px]">
      <span className="pr-[20px]">9:30</span>
      <span>2021/10/11</span>
    </div>
    <div className="ml-[3px] w-[14px] h-full bg-linear-to-b from-[#5a8ac0] to-[#2a5a98] border border-[#7a9ac8]" />
  </div>
);

export default function App() {
  return (
    <div className="relative w-[1920px] h-[1080px] overflow-hidden flex flex-col bg-white [font-family:'Noto_Sans','Noto_Sans_CJK_SC',sans-serif]">
      <TitleBar />
      <TabBar />
      <Ribbon />
      <Toolbar />
      <div className="flex-1 flex min-h-0">
        <Sidebar />
        <div className="w-[6px] bg-white shrink-0" />
        <div className="flex-1 relative bg-linear-to-b from-[#b4b5b7] to-[#e6e7e9] to-75%">
          <Model />
        </div>
      </div>
      <div className="h-[22px] bg-white border-t border-[#aaaaaa] flex items-center justify-end pr-[55px] shrink-0">
        <svg width="16" height="16" viewBox="0 0 16 16"><path d="M1 4V1h3M12 1h3v3M1 12v3h3M12 15h3v-3" stroke="#888" fill="none" /><rect x="3" y="3" width="10" height="10" fill="#fff" stroke="#556" /><rect x="4" y="7" width="8" height="5" fill="#5a8ac8" /></svg>
      </div>
      <Taskbar />
      <Meter />
      <Watermark />
    </div>
  );
}
